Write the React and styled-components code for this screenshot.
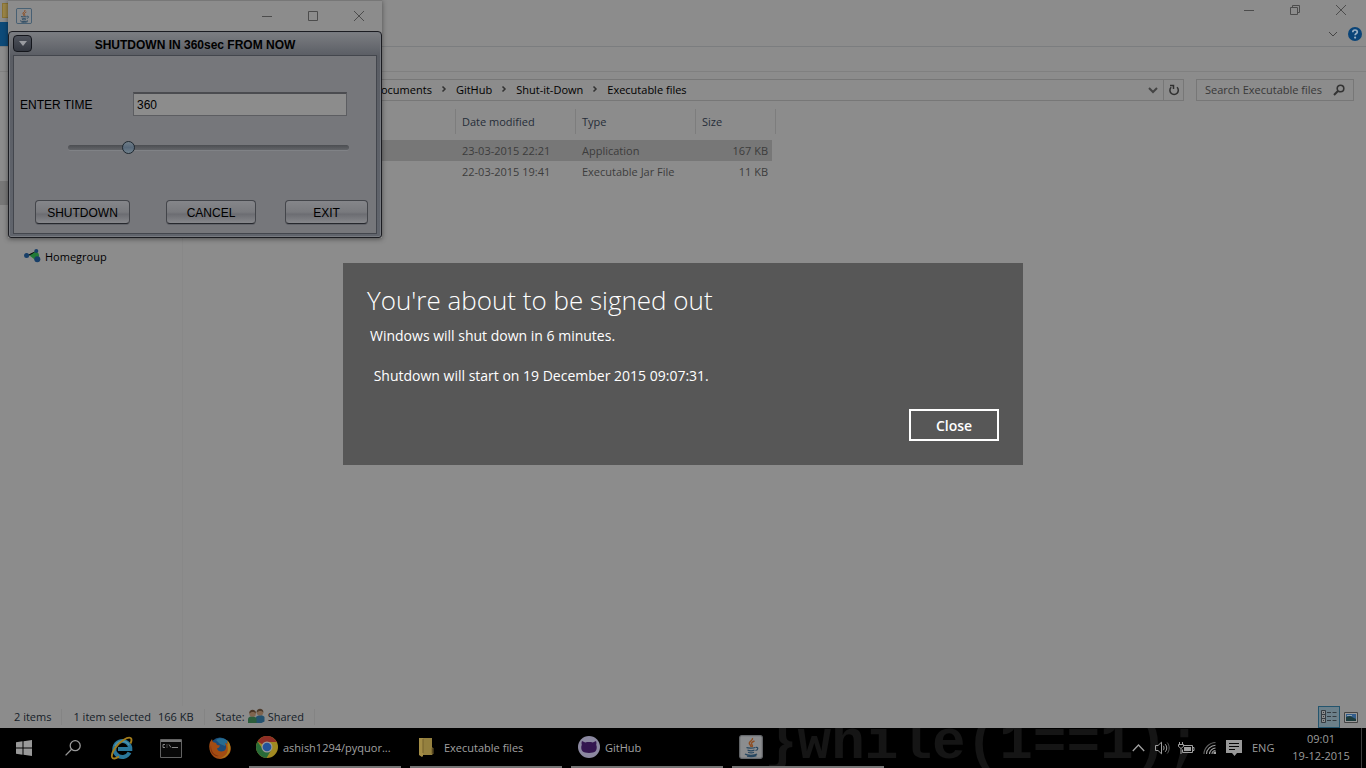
import React, { useState } from "react";
import styled, { createGlobalStyle } from "styled-components";

const GlobalStyle = createGlobalStyle`
  *, *::before, *::after { box-sizing: border-box; }
  body { margin: 0; background: #000; }
  body, button, input { font-family: "Open Sans", "Noto Sans", sans-serif; font-size: 11px; }
  svg { display: block; flex: none; }
`;

const Screen = styled.div`
  display: flex;
  flex-direction: column;
  min-height: 100vh;
  overflow: hidden;
`;

const Desktop = styled.div`
  position: relative;
  flex: 1;
  display: flex;
  flex-direction: column;
`;

/* ---------- explorer window ---------- */

const Explorer = styled.main`
  flex: 1;
  display: flex;
  flex-direction: column;
  background: #8c8c8c;
  color: #000;
`;

const ExplorerTitle = styled.header`
  display: flex;
  height: 22px;
  padding: 0 2px;
`;

const WindowControls = styled.div`
  display: flex;
  margin-left: auto;
`;

const ControlButton = styled.button`
  display: grid;
  place-items: center;
  width: 46px;
  height: ${(p) => p.$height}px;
  padding: 0;
  border: 0;
  background: transparent;
  color: #4c4c4c;
`;

const TabRow = styled.div`
  display: flex;
  align-items: center;
  height: 25px;
  padding-right: 4px;
  border-bottom: 1px solid #7b7d7f;
`;

const FileTab = styled.div`
  width: 56px;
  height: 24px;
  background: #0d4a78;
`;

const RibbonTools = styled.div`
  display: flex;
  align-items: center;
  gap: 10px;
  margin-left: auto;
`;

const IconButton = styled.button`
  display: grid;
  place-items: center;
  padding: 0;
  border: 0;
  background: transparent;
  color: ${(p) => p.$color || "#444"};
`;

const Ribbon = styled.div`
  height: 25px;
  border-bottom: 1px solid #808080;
`;

const AddressRow = styled.div`
  display: flex;
  gap: 12px;
  padding: 7px 12px 6px 100px;
`;

const Field = styled.div`
  display: flex;
  align-items: center;
  height: 22px;
  border: 1px solid #777;
`;

const AddressBox = styled(Field)`
  flex: 1;
`;

const Crumbs = styled.nav`
  display: flex;
  align-items: center;
  gap: 9px;
  margin-right: auto;
  padding: 0 0 2px 272px;
`;

const Crumb = styled.a`
  color: #000;
  text-decoration: none;
  white-space: nowrap;
`;

const AddressAction = styled(IconButton)`
  width: 20px;
  height: 20px;
  border-left: ${(p) => (p.$divided ? "1px solid #777" : "0")};
`;

const SearchBox = styled(Field)`
  width: 158px;
  padding: 0 8px;
`;

const SearchInput = styled.input`
  flex: 1;
  min-width: 0;
  padding: 0 0 2px;
  border: 0;
  outline: 0;
  background: transparent;
  color: #383838;
  &::placeholder { color: #383838; opacity: 1; }
`;

const Body = styled.div`
  flex: 1;
  display: flex;
`;

const Sidebar = styled.aside`
  display: flex;
  flex-direction: column;
  gap: 40px;
  width: 183px;
  padding-top: 74px;
  border-right: 1px solid #888;
`;

const SidebarItem = styled.div`
  display: flex;
  align-items: center;
  gap: 4px;
  height: 24px;
  padding: 0 0 2px 24px;
  background: ${(p) => (p.$selected ? "#777" : "transparent")};
`;

const FileTable = styled.table`
  align-self: flex-start;
  table-layout: fixed;
  width: 593px;
  border-collapse: separate;
  border-spacing: 0;
`;

const HeadCell = styled.th`
  width: ${(p) => p.$width}px;
  padding: 2px 0 6px;
  font-weight: 400;
  text-align: left;
  color: #262d38;
`;

const HeadLabel = styled.div`
  height: 25px;
  padding-left: 6px;
  line-height: 25px;
  border-right: 1px solid ${(p) => (p.$last ? "#7d7d7d" : "transparent")};
  border-left: 1px solid ${(p) => (p.$first ? "transparent" : "#7d7d7d")};
`;

const FileRow = styled.tr`
  height: 21px;
  td { background-color: ${(p) => (p.$selected ? "#777" : "transparent")}; }
`;

const Cell = styled.td`
  padding: 0 0 0 7px;
  color: #3c3c3c;
`;

const SizeCell = styled(Cell)`
  padding-right: 4px;
  text-align: right;
  border-right: 4px solid transparent;
  background-clip: padding-box;
`;

const StatusBar = styled.footer`
  display: flex;
  align-items: center;
  height: 22px;
  padding: 0 4px 0 14px;
  color: #141c28;
`;

const StatusItem = styled.div`
  display: flex;
  align-items: center;
  gap: ${(p) => p.$gap || 0}px;
  height: 16px;
  padding: 0 10px 2px 0;
  margin-right: 11px;
  border-right: 1px solid #848484;
  white-space: nowrap;
`;

const ViewButtons = styled.div`
  display: flex;
  margin-left: auto;
`;

const ViewButton = styled(IconButton)`
  width: 22px;
  height: 22px;
  border: 1px solid ${(p) => (p.$active ? "#24556e" : "transparent")};
  background: ${(p) => (p.$active ? "#6c808a" : "transparent")};
`;

/* ---------- shutdown timer window ---------- */

const TimerWindow = styled.section`
  position: absolute;
  top: 0;
  left: 8px;
  width: 374px;
  background: #8c8c8c;
  border-top: 1px solid #777;
  box-shadow: 0 1px 5px rgba(0, 0, 0, 0.45);
`;

const TimerTitle = styled.header`
  display: flex;
  align-items: center;
  height: 30px;
  padding-left: 8px;
`;

const TimerFrame = styled.div`
  padding: 0 4px 3px;
  border: 1px solid #1b1c21;
  border-radius: 4px 4px 3px 3px;
  background: linear-gradient(#7c7e82, #5a5d64 24px, #60646c);
  box-shadow: inset 0 0 0 1px #777a80;
  font-family: "Liberation Sans", Arial, sans-serif;
`;

const TimerHeading = styled.div`
  display: grid;
  grid-template-columns: 20px 1fr 20px;
  align-items: center;
  height: 23px;
`;

const MenuButton = styled.button`
  display: grid;
  place-items: center;
  width: 19px;
  height: 17px;
  padding: 0;
  border: 1px solid #14161c;
  border-radius: 4px;
  background: linear-gradient(#4f535c, #333740);
`;

const TimerName = styled.h1`
  margin: 0;
  padding-top: 2px;
  font-size: 12px;
  line-height: 16px;
  font-weight: 700;
  text-align: center;
  color: #000;
`;

const TimerForm = styled.form`
  padding: 36px 7px 9px 6px;
  border: 1px solid #43464d;
  background: #76777b;
  color: #000;
`;

const TimeLine = styled.div`
  display: flex;
  align-items: center;
`;

const TimeLabel = styled.label`
  width: 113px;
  padding-top: 2px;
  font-size: 12px;
`;

const TimeInput = styled.input`
  width: 214px;
  height: 24px;
  padding: 0 3px;
  border: 1px solid #5c5d61;
  border-top: 2px solid #4b4c50;
  outline: 0;
  background: #8c8c8c;
  color: #000;
  font-family: inherit;
  font-size: 12px;
`;

const TimeSlider = styled.input`
  display: block;
  appearance: none;
  width: 281px;
  height: 14px;
  margin: 24px 0 46px 48px;
  background: transparent;
  &::-webkit-slider-runnable-track {
    height: 5px;
    border-radius: 3px;
    background: linear-gradient(#4c4e52, #626468);
    box-shadow: 0 1px 0 #808286;
  }
  &::-webkit-slider-thumb {
    appearance: none;
    width: 13px;
    height: 13px;
    margin-top: -4px;
    border: 1px solid #1d2730;
    border-radius: 50%;
    background: linear-gradient(#6f7d88, #58697a 50%, #71828d);
  }
`;

const TimerButtons = styled.div`
  display: grid;
  grid-template-columns: 131px 119px 83px;
  padding-left: 15px;
`;

const TimerButton = styled.button`
  width: ${(p) => p.$width}px;
  height: 24px;
  padding: 2px 0 0;
  border: 1px solid #43454a;
  border-bottom-color: #26282d;
  border-radius: 4px;
  background: linear-gradient(#85868a, #797a7e 50%, #6c6d72 60%, #86878b);
  box-shadow: 0 1px 0 #62646a;
  color: #000;
  font-family: inherit;
  font-size: 12px;
`;

/* ---------- sign-out notice ---------- */

const NoticeLayer = styled.div`
  position: absolute;
  inset: 0;
  display: grid;
  place-items: center;
  pointer-events: none;
`;

const Notice = styled.div`
  display: flex;
  flex-direction: column;
  width: 680px;
  max-width: 100%;
  padding: 17px 24px 24px;
  background: #575757;
  color: #fff;
  pointer-events: auto;
`;

const NoticeTitle = styled.h2`
  margin: 0;
  font-size: 26px;
  line-height: 40px;
  font-weight: 300;
`;

const NoticeText = styled.p`
  margin: 6px 0 23px;
  padding-left: 3px;
  font-size: 14px;
  line-height: 20px;
  white-space: pre-wrap;
`;

const CloseButton = styled.button`
  align-self: flex-end;
  width: 90px;
  height: 32px;
  padding: 0;
  border: 2px solid #fff;
  background: #575757;
  color: #fff;
  font-size: 14px;
  font-weight: 600;
`;

/* ---------- taskbar ---------- */

const Taskbar = styled.footer`
  position: relative;
  display: flex;
  height: 40px;
  overflow: hidden;
  background: #000;
  color: #9c9c9c;
`;

const WallpaperText = styled.div`
  position: absolute;
  left: 764px;
  bottom: -7px;
  font-family: "Liberation Mono", monospace;
  font-size: 56px;
  line-height: 64px;
  font-weight: 700;
  color: #151515;
  white-space: pre;
`;

const QuickBar = styled.div`
  display: flex;
  gap: 1px;
`;

const QuickButton = styled(IconButton)`
  width: 48px;
  height: 40px;
  color: #999;
`;

const TaskList = styled.div`
  display: flex;
  gap: 9px;
  margin-left: 5px;
`;

const TaskButton = styled.button`
  position: relative;
  display: flex;
  align-items: center;
  gap: 5px;
  width: 152px;
  height: 40px;
  padding: 0 7px;
  border: 0;
  border-bottom: 2px solid #757575;
  background: transparent;
  color: #a0a0a0;
  white-space: nowrap;
`;

const Tray = styled.div`
  position: relative;
  display: flex;
  align-items: center;
  margin-left: auto;
`;

const TrayButton = styled(IconButton)`
  width: 24px;
  height: 40px;
  color: #a0a0a0;
`;

const Language = styled.span`
  width: 24px;
  margin: 0 15px 0 6px;
  padding-bottom: 2px;
`;

const Clock = styled.time`
  width: 60px;
  margin-right: 10px;
  padding-bottom: 3px;
  line-height: 17px;
  text-align: center;
`;

const ShowDesktop = styled.button`
  width: 5px;
  height: 40px;
  padding: 0;
  border: 0;
  border-left: 1px solid #3d3d3d;
  background: transparent;
`;

/* ---------- drawings ---------- */

const Minimize = () => (
  <svg width="12" height="12" viewBox="0 0 12 12"><path d="M1 6.5h10" stroke="currentColor" /></svg>
);
const Maximize = () => (
  <svg width="12" height="12" viewBox="0 0 12 12" fill="none"><path d="M1.5 1.5h9v9h-9z" stroke="currentColor" /></svg>
);
const Restore = () => (
  <svg width="12" height="12" viewBox="0 0 12 12" fill="none" stroke="currentColor">
    <path d="M1.500 3.500h7v7h-7zM3.500 3.500v-2h7v7h-2" />
  </svg>
);
const Cross = () => (
  <svg width="12" height="12" viewBox="0 0 12 12"><path d="M1 1l10 10M11 1L1 11" stroke="currentColor" /></svg>
);
const ChevronRight = () => (
  <svg width="6" height="8" viewBox="0 0 6 8" fill="none"><path d="M1.500 1.500l2.500 2.500-2.500 2.500" stroke="#333" strokeWidth="1.500" /></svg>
);
const ChevronDown = ({ heavy }) => (
  <svg width="10" height="8" viewBox="0 0 10 8" fill="none">
    <path d="M1 2l4 4 4-4" stroke="currentColor" strokeWidth={heavy ? 2 : 1} />
  </svg>
);
const Refresh = () => (
  <svg width="12" height="12" viewBox="0 0 12 12" fill="none" stroke="#303030" strokeWidth="1.500">
    <path d="M9 3.200A4.200 4.200 0 1 1 3.200 3.200" />
    <path d="M2 1.500h3.500v3.500" />
  </svg>
);
const FieldSearch = () => (
  <svg width="12" height="12" viewBox="0 0 12 12" fill="none" stroke="#333">
    <circle cx="7.500" cy="4.500" r="3.300" strokeWidth="1.600" />
    <path d="M5.200 6.800L1 11" strokeWidth="2" />
  </svg>
);
const Help = () => (
  <svg width="14" height="14" viewBox="0 0 14 14" fill="none">
    <circle cx="7" cy="7" r="7" fill="#0a4478" />
    <path d="M4.800 5.200c0-3 4.500-2.800 4.500-.3 0 1.600-2.200 1.600-2.200 3.400" stroke="#9ab0c4" strokeWidth="1.700" />
    <circle cx="7.100" cy="10.600" r="1.100" fill="#9ab0c4" />
  </svg>
);
const FolderSmall = () => (
  <svg width="16" height="20" viewBox="0 0 16 20"><path d="M0 3h7l2 2h7v13H0z" fill="#8a7434" /><path d="M1 4h5v13H1z" fill="#9c8648" /></svg>
);
const Homegroup = () => (
  <svg width="17" height="14" viewBox="0 0 17 14">
    <path d="M2.500 6.500L10 6l3-4.500M10 7l4 4" stroke="#2f5f58" strokeWidth="1" />
    <path d="M5.800 6.800L11 2.800a4 4 0 0 1 0 8z" fill="#227936" />
    <circle cx="2.600" cy="6.600" r="2.500" fill="#173e68" />
    <circle cx="12.300" cy="2" r="2" fill="#173e68" />
    <circle cx="13.300" cy="10.200" r="3" fill="#173e68" />
  </svg>
);
const People = () => (
  <svg width="17" height="16" viewBox="0 0 17 16">
    <path d="M8 15V9c2-2.500 7-2.500 8.500 0v4.500l-3 1.500z" fill="#23516f" />
    <circle cx="12" cy="4.200" r="3.300" fill="#80654f" />
    <path d="M8.700 4.500C8.500-.5 15.500-.5 15.400 4.500c-1-2-5-2.200-6.700 0z" fill="#4a3a2c" />
    <path d="M0 15V10.500c1.500-3 7-3 8.500 0V15z" fill="#2b5d3b" />
    <circle cx="4.600" cy="5.500" r="3.300" fill="#80654f" />
    <path d="M1.300 5.500C1 .5 8 .5 8 5.500c-1-2-5-2.200-6.700 0z" fill="#4a3626" />
  </svg>
);
const DetailsView = () => (
  <svg width="16" height="14" viewBox="0 0 16 14" fill="none" stroke="#343b40">
    <path d="M.5.5h4v4h-4zM.5 4.500h4v4h-4zM.5 8.500h4v4h-4z" fill="#8c8c8c" />
    <path d="M2 2.500h1M2 6.500h1M2 10.500h1M6 2.500h4M11.500 2.500h4M6 6.500h4M11.500 6.500h4M6 10.500h4M11.500 10.500h4" />
  </svg>
);
const PictureView = () => (
  <svg width="14" height="11" viewBox="0 0 14 11">
    <path d="M.5.5h13v10H.5z" fill="#999" stroke="#444" />
    <path d="M2 2h10v7H2z" fill="#335e8c" />
    <path d="M2 5l4-1 6 3v2H2z" fill="#1d3b3c" />
    <path d="M3 3h5v1H3z" fill="#8ea2b0" />
  </svg>
);
const JavaCup = ({ size }) => (
  <svg width={size} height={size} viewBox="0 0 24 24" fill="none">
    <rect x=".7" y=".7" width="22.600" height="22.600" rx="2" fill="#8b8d8f" stroke={size < 20 ? "#33536b" : "#66696d"} strokeWidth="1.200" />
    <path d="M13.500 3c1 2.500-4.500 3.700-3 6 .6 1 1.500 1.500 1.500 3M15.500 6c-3 1.200-3.800 2.400-2.400 4 .7.900.3 1.500-.4 2" stroke="#8f4d20" strokeWidth="1.400" />
    <path d="M7.500 12.500c1 .8 7 .8 8.500 0M8.500 15c2 .9 5 .9 7 0M9 17.200c2 .8 4.500.8 6 0M16.500 12.500c3-1 3 2.500 0 3M6 19c2 1.800 10 1.700 12 0M8 21.200c3 .6 7 .4 9.500-.6" stroke="#26465f" strokeWidth="1.200" />
  </svg>
);
const WindowsLogo = () => (
  <svg width="16" height="16" viewBox="0 0 16 16" fill="#999">
    <path d="M0 2.300L6.500 1.300v6.200H0zM7.500 1.200L16 0v7.500H7.500zM0 8.500h6.500v6.200L0 13.700zM7.500 8.500H16V16l-8.500-1.200z" />
  </svg>
);
const TaskSearch = () => (
  <svg width="16" height="16" viewBox="0 0 16 16" fill="none" stroke="currentColor" strokeWidth="1.300">
    <circle cx="10.200" cy="5.700" r="5" /><path d="M6.600 9.300L.6 15.400" />
  </svg>
);
const InternetExplorer = () => (
  <svg width="24" height="24" viewBox="0 0 24 24" fill="none">
    <path d="M19.500 16.500A8 8 0 1 1 20.300 13H8" stroke="#2a779b" strokeWidth="4" />
    <path d="M5 10a8 8 0 0 1 14-1" stroke="#4d93ae" strokeWidth="1.500" />
    <path d="M20.500 7.500C23 2 20.500-.5 13.500 4 7 8 1 16.500 2 21c.8 2.600 4 1.500 7-.4" stroke="#a37d1b" strokeWidth="1.900" />
  </svg>
);
const Terminal = () => (
  <svg width="22" height="19" viewBox="0 0 22 19" fill="none">
    <path d="M.5.5h21v18H.5z" fill="#090909" stroke="#626262" />
    <path d="M1 1h20v2H1z" fill="#777" />
    <path d="M5 5.500H3v3h2M7 5.500v1M7 7.500v1M9 5.500l2 3M12 8.500h6" stroke="#858585" />
  </svg>
);
const Firefox = () => (
  <svg width="22" height="22" viewBox="0 0 22 22">
    <circle cx="11" cy="10.500" r="10" fill="#1b4b78" />
    <path d="M7 3c3-3 9-2 12 1l-3 5-5-2z" fill="#256c91" />
    <path d="M1 5l2-3 .8 3L7 6l1 2 3 .5-1 2-2 1c.5 3 4 3.500 7 2.500 2-1 3-4 1-8l3 1-1-3c4 3 5 9 2 13-3 5-10 6.500-15 3C.5 16.500-.8 10 1 5z" fill="#a34c12" />
    <path d="M18.500 3.500c4 4 4 11-.5 15-2 2-5 3-7 3 5-2 9-5 7.500-12z" fill="#ab7c19" />
    <path d="M2 8c0 7 3 10 8 11-5 1-10-4-8-11z" fill="#82300f" />
  </svg>
);
const Chrome = () => (
  <svg width="22" height="22" viewBox="0 0 22 22">
    <circle cx="11" cy="11" r="11" fill="#a18921" />
    <path d="M11 11L1.500 5.500A11 11 0 0 1 20.500 5.500L21 6H11z" fill="#8e2d25" />
    <path d="M1.500 5.500A11 11 0 0 0 10.500 22l5-8.500L11 11 6 12z" fill="#286b38" />
    <circle cx="11" cy="11" r="5.500" fill="#999" />
    <circle cx="11" cy="11" r="4.300" fill="#24539a" />
  </svg>
);
const TaskFolder = () => (
  <svg width="22" height="22" viewBox="0 0 22 22">
    <path d="M4 2h11v17H4z" fill="#94803f" /><path d="M2 2h4v18l-1 1-3-2z" fill="#a48d46" />
    <path d="M6 3v14M15 12h1v6h-1z" stroke="#75612c" />
  </svg>
);
const GitHubCat = () => (
  <svg width="22" height="22" viewBox="0 0 22 22">
    <circle cx="11" cy="11" r="11" fill="#8b88a0" />
    <path d="M4 5l3.200 1.500c2.500-.6 5.100-.6 7.600 0L18 5c.6 1.500.5 2.700.2 3.700 1 2 .6 5-.7 6.600-2 2.300-11 2.300-13 0-1.300-1.600-1.700-4.600-.7-6.600C3.500 7.700 3.400 6.500 4 5z" fill="#33164f" />
  </svg>
);
const TrayArrow = () => (
  <svg width="13" height="8" viewBox="0 0 13 8" fill="none" stroke="currentColor" strokeWidth="1.300"><path d="M.8 7l5.700-6 5.700 6" /></svg>
);
const Volume = () => (
  <svg width="15" height="14" viewBox="0 0 15 14" fill="none" stroke="currentColor">
    <path d="M.5 4.500h2.500L6.500 1.200v11.600L3 9.500H.5z" /><path d="M8.300 4.800c1 1.300 1 3.100 0 4.400M10.200 3.200c2 2.200 2 5.400 0 7.600" /><path d="M12.200 1.500c2.600 3 2.600 8 0 11" opacity=".55" />
  </svg>
);
const Battery = () => (
  <svg width="17" height="13" viewBox="0 0 17 13" fill="none" stroke="currentColor">
    <path d="M5 3.500h9.500v7H4.500v-3M14.500 5.500h1.500v3h-1.500" /><path d="M6 5h7v4H6z" fill="currentColor" stroke="none" />
    <path d="M1.500 0v2M4.500 0v2M.5 2.500h5v2L3.500 6h-1L.5 4.500zM3 6v6" />
  </svg>
);
const Wifi = () => (
  <svg width="14" height="14" viewBox="0 0 14 14" fill="none" stroke="currentColor" strokeWidth="1.100">
    <path d="M1 13C1 7 6.500 1.500 12.500 1.500" opacity=".6" /><path d="M3.500 13c0-4.500 4.500-8.700 9-8.700M6.500 13c0-3 3-6 6-6M9 13c0-2 1.800-3.500 3.500-3.500" /><path d="M10.500 10.500h2.500v2.500h-2.500z" fill="currentColor" stroke="none" />
  </svg>
);
const Message = () => (
  <svg width="16" height="16" viewBox="0 0 16 16">
    <path d="M0 0h16v13h-5l-2.500 3L6 13H0z" fill="#999" /><path d="M3 3.500h10M3 6.500h10M3 9.500h6" stroke="#050505" />
  </svg>
);

const files = [
  { date: "23-03-2015 22:21", type: "Application", size: "167 KB", selected: true },
  { date: "22-03-2015 19:41", type: "Executable Jar File", size: "11 KB" },
];

const tasks = [
  { label: "ashish1294/pyquor...", icon: <Chrome /> },
  { label: "Executable files", icon: <TaskFolder /> },
  { label: "GitHub", icon: <GitHubCat /> },
  { label: "", name: "Java", icon: <JavaCup size={24} /> },
];

const quick = [
  ["Start", WindowsLogo],
  ["Search", TaskSearch],
  ["Internet Explorer", InternetExplorer],
  ["Command Prompt", Terminal],
  ["Firefox", Firefox],
];

const trayIcons = [
  ["Show hidden icons", TrayArrow],
  ["Volume", Volume],
  ["Battery", Battery],
  ["Network", Wifi],
  ["Notifications", Message],
];

const crumbs = ["Documents", "GitHub", "Shut-it-Down", "Executable files"];

export default function App() {
  const [seconds, setSeconds] = useState("360");
  const [noticeOpen, setNoticeOpen] = useState(true);
  const onTime = (e) => setSeconds(e.target.value);

  return (
    <Screen>
      <GlobalStyle />
      <Desktop>
        <Explorer>
          <ExplorerTitle>
            <FolderSmall />
            <WindowControls>
              <ControlButton $height={20} aria-label="Minimize"><Minimize /></ControlButton>
              <ControlButton $height={20} aria-label="Restore"><Restore /></ControlButton>
              <ControlButton $height={20} aria-label="Close window"><Cross /></ControlButton>
            </WindowControls>
          </ExplorerTitle>
          <TabRow>
            <FileTab />
            <RibbonTools>
              <IconButton aria-label="Expand ribbon"><ChevronDown /></IconButton>
              <IconButton aria-label="Help"><Help /></IconButton>
            </RibbonTools>
          </TabRow>
          <Ribbon />
          <AddressRow>
            <AddressBox>
              <Crumbs aria-label="Folder path">
                {crumbs.map((name, i) => (
                  <React.Fragment key={name}>
                    {i > 0 && <ChevronRight />}
                    <Crumb href="#">{name}</Crumb>
                  </React.Fragment>
                ))}
              </Crumbs>
              <AddressAction aria-label="Previous locations"><ChevronDown heavy /></AddressAction>
              <AddressAction $divided aria-label="Refresh"><Refresh /></AddressAction>
            </AddressBox>
            <SearchBox>
              <SearchInput aria-label="Search Executable files" placeholder="Search Executable files" />
              <FieldSearch />
            </SearchBox>
          </AddressRow>
          <Body>
            <Sidebar>
              <SidebarItem $selected />
              <SidebarItem><Homegroup />Homegroup</SidebarItem>
            </Sidebar>
            <FileTable>
              <thead>
                <tr>
                  <HeadCell $width={272}><HeadLabel $first /></HeadCell>
                  <HeadCell $width={120}><HeadLabel>Date modified</HeadLabel></HeadCell>
                  <HeadCell $width={120}><HeadLabel>Type</HeadLabel></HeadCell>
                  <HeadCell $width={81}><HeadLabel $last>Size</HeadLabel></HeadCell>
                </tr>
              </thead>
              <tbody>
                {files.map((f) => (
                  <FileRow key={f.date} $selected={f.selected}>
                    <Cell />
                    <Cell>{f.date}</Cell>
                    <Cell>{f.type}</Cell>
                    <SizeCell>{f.size}</SizeCell>
                  </FileRow>
                ))}
              </tbody>
            </FileTable>
          </Body>
          <StatusBar>
            <StatusItem>2 items</StatusItem>
            <StatusItem $gap={7}><span>1 item selected</span><span>166 KB</span></StatusItem>
            <StatusItem $gap={3}><span>State:</span><People /><span>Shared</span></StatusItem>
            <ViewButtons>
              <ViewButton $active aria-label="Details view"><DetailsView /></ViewButton>
              <ViewButton aria-label="Large thumbnails"><PictureView /></ViewButton>
            </ViewButtons>
          </StatusBar>
        </Explorer>

        <TimerWindow>
          <TimerTitle>
            <JavaCup size={16} />
            <WindowControls>
              <ControlButton $height={28} aria-label="Minimize timer"><Minimize /></ControlButton>
              <ControlButton $height={28} aria-label="Maximize timer"><Maximize /></ControlButton>
              <ControlButton $height={28} aria-label="Close timer"><Cross /></ControlButton>
            </WindowControls>
          </TimerTitle>
          <TimerFrame>
            <TimerHeading>
              <MenuButton aria-label="Window menu">
                <svg width="8" height="5" viewBox="0 0 8 5"><path d="M0 0h8L4 5z" fill="#999ba0" /></svg>
              </MenuButton>
              <TimerName>SHUTDOWN IN 360sec FROM NOW</TimerName>
            </TimerHeading>
            <TimerForm onSubmit={(e) => e.preventDefault()}>
              <TimeLine>
                <TimeLabel htmlFor="time">ENTER TIME</TimeLabel>
                <TimeInput id="time" value={seconds} onChange={onTime} />
              </TimeLine>
              <TimeSlider type="range" min="0" max="1800" value={seconds} onChange={onTime} aria-label="Seconds" />
              <TimerButtons>
                <TimerButton $width={95}>SHUTDOWN</TimerButton>
                <TimerButton $width={90}>CANCEL</TimerButton>
                <TimerButton $width={83}>EXIT</TimerButton>
              </TimerButtons>
            </TimerForm>
          </TimerFrame>
        </TimerWindow>

        {noticeOpen && (
          <NoticeLayer>
            <Notice role="dialog" aria-labelledby="notice-title">
              <NoticeTitle id="notice-title">You're about to be signed out</NoticeTitle>
              <NoticeText>{"Windows will shut down in 6 minutes.\n\n Shutdown will start on 19 December 2015 09:07:31."}</NoticeText>
              <CloseButton onClick={() => setNoticeOpen(false)}>Close</CloseButton>
            </Notice>
          </NoticeLayer>
        )}
      </Desktop>

      <Taskbar>
        <WallpaperText aria-hidden="true">{"}while(1==1);"}</WallpaperText>
        <QuickBar>
          {quick.map(([name, Icon]) => (
            <QuickButton key={name} aria-label={name}><Icon /></QuickButton>
          ))}
        </QuickBar>
        <TaskList>
          {tasks.map((t) => (
            <TaskButton key={t.label} aria-label={t.name}>{t.icon}{t.label}</TaskButton>
          ))}
        </TaskList>
        <Tray>
          {trayIcons.map(([name, Icon]) => (
            <TrayButton key={name} aria-label={name}><Icon /></TrayButton>
          ))}
          <Language>ENG</Language>
          <Clock>09:01<br />19-12-2015</Clock>
          <ShowDesktop aria-label="Show desktop" />
        </Tray>
      </Taskbar>
    </Screen>
  );
}
